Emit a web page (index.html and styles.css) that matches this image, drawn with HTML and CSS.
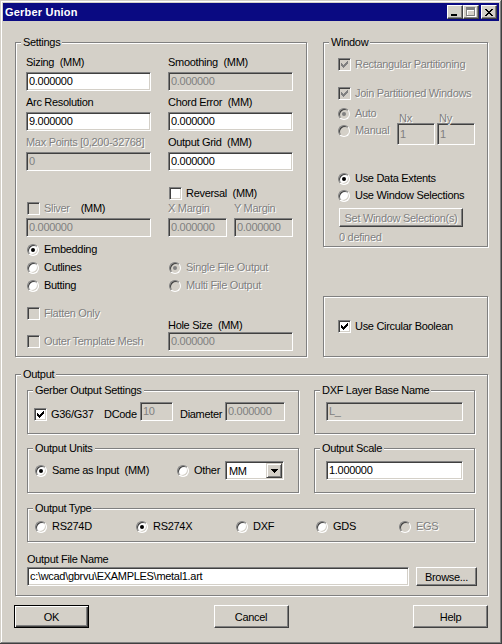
FILE: index.html
```html
<!DOCTYPE html>
<html>
<head>
	<meta charset="UTF-8">
	<title>Gerber Union</title>
	<link rel="stylesheet" href="styles.css">
</head>
<body>
<div class="window">
	<div class="titlebar">
		<span class="title">Gerber Union</span>
		<div class="tbtns">
			<span class="tbtn"><svg width="12" height="10" viewBox="0 0 12 10"><rect x="2" y="7" width="6" height="2" fill="#000"/></svg></span>
			<span class="tbtn"><svg width="12" height="10" viewBox="0 0 12 10"><path d="M2 1h9v9h-9z M3 4v5h7v-5z" fill="#fff" fill-rule="evenodd"/><path d="M1 0h9v9h-9z M2 3v5h7v-5z" fill="#808080" fill-rule="evenodd"/></svg></span>
			<span class="tbtn close"><svg width="8" height="7" viewBox="0 0 8 7"><path d="M0 0h2v1h-2z M6 0h2v1h-2z M1 1h2v1h-2z M5 1h2v1h-2z M2 2h4v1h-4z M3 3h2v1h-2z M2 4h4v1h-4z M1 5h2v1h-2z M5 5h2v1h-2z M0 6h2v1h-2z M6 6h2v1h-2z" fill="#000"/></svg></span>
		</div>
	</div>

	<div class="client">
		<div class="top">
			<!-- settings -->
			<div class="group settings">
				<div class="legend">Settings</div>
				<div class="inner">
					<div class="fields">
						<div><div class="lbl">Sizing&nbsp; (MM)</div><div class="edit">0.000000</div></div>
						<div><div class="lbl">Smoothing&nbsp; (MM)</div><div class="edit off">0.000000</div></div>
						<div><div class="lbl">Arc Resolution</div><div class="edit">9.000000</div></div>
						<div><div class="lbl">Chord Error&nbsp; (MM)</div><div class="edit">0.000000</div></div>
						<div><div class="lbl gray">Max Points [0,200-32768]</div><div class="edit off">0</div></div>
						<div><div class="lbl">Output Grid&nbsp; (MM)</div><div class="edit">0.000000</div></div>
					</div>
					<div class="pair rev">
						<div class="cell"></div>
						<div class="cell"><div class="chk"><span class="box"></span>Reversal&nbsp; (MM)</div></div>
					</div>
					<div class="pair sliver">
						<div class="cell"><div class="chk"><span class="box off"></span><span class="gray">Sliver</span><span class="mm">(MM)</span></div></div>
						<div class="cell margins"><span class="gray">X Margin</span><span class="gray">Y Margin</span></div>
					</div>
					<div class="pair edits">
						<div class="cell"><div class="edit off">0.000000</div></div>
						<div class="cell margins"><div class="edit off">0.000000</div><div class="edit off">0.000000</div></div>
					</div>
					<div class="opts">
						<div class="pair">
							<div class="cell"><div class="opt"><span class="dot on"></span>Embedding</div></div>
						</div>
						<div class="pair">
							<div class="cell"><div class="opt"><span class="dot"></span>Cutlines</div></div>
							<div class="cell"><div class="opt gray"><span class="dot off on"></span>Single File Output</div></div>
						</div>
						<div class="pair">
							<div class="cell"><div class="opt"><span class="dot"></span>Butting</div></div>
							<div class="cell"><div class="opt gray"><span class="dot off"></span>Multi File Output</div></div>
						</div>
					</div>
					<div class="pair tail">
						<div class="cell">
							<div class="chk gray"><span class="box off"></span>Flatten Only</div>
							<div class="chk gray outer"><span class="box off"></span>Outer Template Mesh</div>
						</div>
						<div class="cell hole">
							<div class="lbl">Hole Size&nbsp; (MM)</div>
							<div class="edit off">0.000000</div>
						</div>
					</div>
				</div>
			</div>

			<div class="side">
				<div class="group wingroup">
					<div class="legend">Window</div>
					<div class="inner">
						<div class="chk gray rect"><span class="box off"><svg class="tick" width="7" height="7" viewBox="0 0 7 7"><path d="M0 2h1v3h-1z M1 3h1v3h-1z M2 4h1v3h-1z M3 3h1v3h-1z M4 2h1v3h-1z M5 1h1v3h-1z M6 0h1v3h-1z"/></svg></span>Rectangular Partitioning</div>
						<div class="chk gray join"><span class="box off"><svg class="tick" width="7" height="7" viewBox="0 0 7 7"><path d="M0 2h1v3h-1z M1 3h1v3h-1z M2 4h1v3h-1z M3 3h1v3h-1z M4 2h1v3h-1z M5 1h1v3h-1z M6 0h1v3h-1z"/></svg></span>Join Partitioned Windows</div>
						<div class="nxny">
							<div class="modes">
								<div class="opt gray"><span class="dot off on"></span>Auto</div>
								<div class="opt gray manual"><span class="dot off"></span>Manual</div>
							</div>
							<div class="nx"><div class="sub gray">Nx</div><div class="edit off tall">1</div></div>
							<div class="nx"><div class="sub gray">Ny</div><div class="edit off tall">1</div></div>
						</div>
						<div class="opt extents"><span class="dot on"></span>Use Data Extents</div>
						<div class="opt sel"><span class="dot"></span>Use Window Selections</div>
						<div class="btn dis setsel">Set Window Selection(s)</div>
						<div class="gray defined">0 defined</div>
					</div>
				</div>
				<div class="group circ">
					<div class="chk"><span class="box"><svg class="tick" width="7" height="7" viewBox="0 0 7 7"><path d="M0 2h1v3h-1z M1 3h1v3h-1z M2 4h1v3h-1z M3 3h1v3h-1z M4 2h1v3h-1z M5 1h1v3h-1z M6 0h1v3h-1z"/></svg></span>Use Circular Boolean</div>
				</div>
			</div>
		</div>

		<!-- output -->
		<div class="group output">
			<div class="legend">Output</div>
			<div class="inner">
				<div class="orow first">
					<div class="group gerber">
						<div class="legend">Gerber Output Settings</div>
						<div class="inner">
							<div class="grow">
								<div class="chk g36"><span class="box"><svg class="tick" width="7" height="7" viewBox="0 0 7 7"><path d="M0 2h1v3h-1z M1 3h1v3h-1z M2 4h1v3h-1z M3 3h1v3h-1z M4 2h1v3h-1z M5 1h1v3h-1z M6 0h1v3h-1z"/></svg></span>G36/G37</div>
								<span class="dcode">DCode</span>
								<div class="edit off dc">10</div>
								<span class="diam">Diameter</span>
								<div class="edit off dm">0.000000</div>
							</div>
						</div>
					</div>
					<div class="group dxf">
						<div class="legend">DXF Layer Base Name</div>
						<div class="inner"><div class="edit off wide">L_</div></div>
					</div>
				</div>
				<div class="orow second">
					<div class="group units">
						<div class="legend">Output Units</div>
						<div class="inner">
							<div class="urow">
								<div class="opt same"><span class="dot on"></span>Same as Input&nbsp; (MM)</div>
								<div class="opt other"><span class="dot"></span>Other</div>
								<div class="combo"><span>MM</span><span class="drop"><svg width="7" height="4" viewBox="0 0 7 4"><path d="M0 0h7v1h-1v1h-1v1h-1v1h-1v-1h-1v-1h-1v-1h-1z" fill="#000"/></svg></span></div>
							</div>
						</div>
					</div>
					<div class="group scale">
						<div class="legend">Output Scale</div>
						<div class="inner"><div class="edit wide">1.000000</div></div>
					</div>
				</div>
				<div class="group otype">
					<div class="legend">Output Type</div>
					<div class="inner">
						<div class="trow">
							<div class="opt t1"><span class="dot"></span>RS274D</div>
							<div class="opt t2"><span class="dot on"></span>RS274X</div>
							<div class="opt t3"><span class="dot"></span>DXF</div>
							<div class="opt t4"><span class="dot"></span>GDS</div>
							<div class="opt gray"><span class="dot off"></span>EGS</div>
						</div>
					</div>
				</div>
				<div class="lbl fname">Output File Name</div>
				<div class="filerow">
					<div class="edit file">c:\wcad\gbrvu\EXAMPLES\metal1.art</div>
					<div class="btn browse">Browse...</div>
				</div>
			</div>
		</div>

		<div class="actions">
			<div class="btn def">OK</div>
			<div class="btn">Cancel</div>
			<div class="btn">Help</div>
		</div>
	</div>
</div>
</body>
</html>
```

FILE: styles.css
```css
* {
	margin: 0;
	padding: 0;
	box-sizing: border-box;
}

body {
	background: #d4d0c8;
	font-family: "Liberation Sans", Arial, sans-serif;
	font-size: 11px;
	color: #000;
	letter-spacing: -0.3px;
}

.window {
	width: 502px;
	height: 644px;
	padding: 3px;
	background: #d4d0c8;
	box-shadow: inset -1px -1px #404040, inset 1px 1px #d4d0c8, inset -2px -2px #808080, inset 2px 2px #fff;
}

/* title bar */
.titlebar {
	height: 18px;
	background: #0a0a82;
	display: flex;
	align-items: center;
	justify-content: space-between;
	padding: 0 2px;
}
.title {
	color: #fff;
	font-weight: bold;
	letter-spacing: 0.2px;
	line-height: 18px;
}
.tbtns {
	display: flex;
}
.tbtn {
	width: 16px;
	height: 14px;
	display: flex;
	align-items: center;
	justify-content: center;
	background: #d4d0c8;
	border: 1px solid;
	border-color: #fff #404040 #404040 #fff;
	box-shadow: inset -1px -1px #808080;
}
.tbtn.close {
	margin-left: 2px;
}

.client {
	padding: 21px 0 0 12px;
}

.top {
	display: flex;
	align-items: flex-start;
}

/* group boxes */
.group {
	border: 1px solid #808080;
	box-shadow: inset 1px 1px #fff, 1px 1px #fff;
}
.legend {
	display: table;
	margin: -7px 0 0 5px;
	padding: 0 2px;
	line-height: 13px;
	background: #d4d0c8;
	white-space: nowrap;
}

.gray {
	color: #808080;
	text-shadow: 1px 1px 0 #fff;
}

.lbl {
	line-height: 13px;
	margin-bottom: 3px;
	white-space: nowrap;
}

/* edit boxes */
.edit {
	height: 19px;
	border: 1px solid;
	border-color: #808080 #fff #fff #808080;
	box-shadow: inset 1px 1px #404040, inset -1px -1px #d4d0c8;
	background: #fff;
	padding: 0 2px;
	line-height: 17px;
	white-space: nowrap;
	overflow: hidden;
}
.edit.off {
	background: #d4d0c8;
	color: #808080;
}
.edit.tall {
	height: 22px;
	line-height: 20px;
}

/* check boxes and radios */
.chk, .opt {
	display: flex;
	align-items: center;
	height: 13px;
	line-height: 13px;
	white-space: nowrap;
}
.chk {
	gap: 4px;
}
.opt {
	gap: 5px;
}
.box {
	width: 13px;
	height: 13px;
	flex: none;
	display: flex;
	align-items: center;
	justify-content: center;
	background: #fff;
	border: 1px solid;
	border-color: #808080 #fff #fff #808080;
	box-shadow: inset 1px 1px #404040, inset -1px -1px #d4d0c8;
}
.box.off {
	background: #d4d0c8;
}
.tick {
	fill: #000;
	shape-rendering: crispEdges;
}
.box.off .tick {
	fill: #808080;
}
.dot {
	width: 12px;
	height: 12px;
	flex: none;
	border-radius: 50%;
	display: flex;
	align-items: center;
	justify-content: center;
	background: #fff;
	border: 1px solid;
	border-color: #808080 #fff #fff #808080;
	box-shadow: inset 1px 1px #404040, inset -1px -1px #d4d0c8;
}
.dot.on::after {
	content: "";
	width: 4px;
	height: 4px;
	border-radius: 50%;
	background: #000;
}
.dot.off {
	background: #d4d0c8;
}
.dot.off.on::after {
	background: #808080;
}

/* buttons */
.btn {
	height: 23px;
	width: 75px;
	display: flex;
	align-items: center;
	justify-content: center;
	background: #d4d0c8;
	border: 1px solid;
	border-color: #fff #404040 #404040 #fff;
	box-shadow: inset -1px -1px #808080;
	white-space: nowrap;
}
.btn.def {
	border-color: #000;
	box-shadow: inset 1px 1px #fff, inset -1px -1px #404040, inset -2px -2px #808080;
}
.btn.dis {
	color: #808080;
	text-shadow: 1px 1px 0 #fff;
}

/* settings group */
.settings {
	width: 292px;
	height: 315px;
}
.settings .inner {
	padding-left: 10px;
}
.settings .chk, .settings .opt {
	margin-left: 1px;
}
.fields {
	display: grid;
	grid-template-columns: 125px 125px;
	column-gap: 17px;
	row-gap: 5px;
	margin-top: 7px;
}
.pair {
	display: flex;
	gap: 17px;
}
.pair > .cell {
	width: 125px;
}
.rev {
	margin-top: 16px;
}
.sliver {
	margin-top: 2px;
	line-height: 13px;
}
.mm {
	margin-left: 7px;
}
.margins {
	display: flex;
	gap: 7px;
}
.margins > * {
	width: 59px;
}
.edits {
	margin-top: 3px;
}
.opts {
	margin-top: 6px;
	display: flex;
	flex-direction: column;
	gap: 5px;
}
.tail {
	margin-top: 15px;
}
.outer {
	margin-top: 15px;
}
.hole {
	margin-top: 12px;
}
.hole .lbl {
	margin-bottom: 0;
}

/* window group */
.side {
	margin-left: 16px;
	width: 165px;
}
.wingroup {
	height: 205px;
}
.wingroup .inner {
	padding-left: 14px;
}
.rect {
	margin-top: 9px;
}
.join {
	margin-top: 16px;
}
.nxny {
	display: flex;
	margin-top: 7px;
}
.modes {
	width: 59px;
}
.manual {
	margin-top: 4px;
}
.nx {
	width: 38px;
	margin-right: 2px;
}
.sub {
	margin: 7px 0 0 2px;
	line-height: 9px;
	height: 9px;
}
.extents {
	margin-top: 27px;
}
.sel {
	margin-top: 4px;
}
.setsel {
	width: 124px;
	height: 19px;
	margin: 6px 0 0 1px;
}
.defined {
	margin: 4px 0 0 1px;
	line-height: 13px;
}
.circ {
	height: 61px;
	margin-top: 49px;
	display: flex;
	align-items: center;
	padding-left: 14px;
}

/* output group */
.output {
	width: 473px;
	height: 222px;
	margin-top: 17px;
}
.output > .inner {
	padding-left: 11px;
}
.orow {
	display: flex;
	gap: 15px;
}
.orow.first {
	margin-top: 9px;
}
.orow.second {
	margin-top: 14px;
}
.gerber, .units {
	width: 272px;
}
.dxf, .scale {
	width: 161px;
}
.orow.first .group {
	height: 44px;
}
.orow.second .group {
	height: 45px;
}
.gerber .inner {
	padding-left: 6px;
}
.grow {
	display: flex;
	align-items: flex-end;
	margin-top: 5px;
	height: 19px;
	line-height: 13px;
}
.g36 {
	width: 70px;
}
.dcode {
	width: 36px;
}
.dc {
	width: 33px;
}
.diam {
	width: 45px;
	margin-left: 7px;
}
.dm {
	width: 60px;
}
.dxf .inner, .scale .inner {
	padding-left: 11px;
}
.wide {
	width: 137px;
	margin-top: 5px;
}
.scale .wide {
	margin-top: 6px;
}
.units .inner {
	padding-left: 7px;
}
.urow {
	display: flex;
	align-items: center;
	height: 19px;
	margin-top: 6px;
}
.same {
	width: 142px;
}
.other {
	width: 48px;
}
.combo {
	width: 59px;
	height: 19px;
	display: flex;
	align-items: center;
	padding: 1px 1px 1px 3px;
	background: #fff;
	border: 1px solid;
	border-color: #808080 #fff #fff #808080;
	box-shadow: inset 1px 1px #404040, inset -1px -1px #d4d0c8;
}
.drop {
	margin-left: auto;
	width: 16px;
	height: 15px;
	display: flex;
	align-items: center;
	justify-content: center;
	background: #d4d0c8;
	border: 1px solid;
	border-color: #d4d0c8 #404040 #404040 #d4d0c8;
	box-shadow: inset 1px 1px #fff, inset -1px -1px #808080;
}
.otype {
	width: 448px;
	height: 34px;
	margin-top: 15px;
}
.otype .inner {
	padding-left: 7px;
}
.trow {
	display: flex;
	margin-top: 5px;
}
.t1 {
	width: 101px;
}
.t2 {
	width: 100px;
}
.t3 {
	width: 80px;
}
.t4 {
	width: 83px;
}
.fname {
	margin: 11px 0 1px;
}
.filerow {
	display: flex;
	align-items: center;
}
.file {
	width: 382px;
}
.browse {
	width: 61px;
	height: 19px;
	margin-left: 7px;
}

/* dialog buttons */
.actions {
	display: flex;
	justify-content: space-between;
	width: 474px;
	margin: 9px 0 0 -1px;
}
```
